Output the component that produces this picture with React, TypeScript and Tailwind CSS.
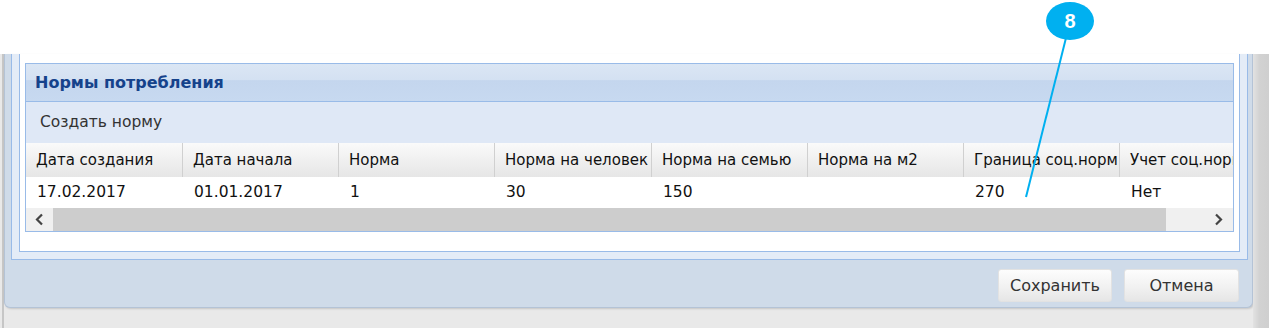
import React from 'react';

const font = { fontFamily: '"DejaVu Sans", Verdana, sans-serif' };

const columns = [
  { title: 'Дата создания', value: '17.02.2017', w: 'w-[157px]' },
  { title: 'Дата начала', value: '01.01.2017', w: 'w-[156px]' },
  { title: 'Норма', value: '1', w: 'w-[156px]' },
  { title: 'Норма на человек', value: '30', w: 'w-[157px]' },
  { title: 'Норма на семью', value: '150', w: 'w-[156px]' },
  { title: 'Норма на м2', value: '', w: 'w-[156px]' },
  { title: 'Граница соц.норм', value: '270', w: 'w-[156px]' },
  { title: 'Учет соц.норм', value: 'Нет', w: 'w-[156px]' },
];

const Chevron = ({ dir }: { dir: 'left' | 'right' }) => (
  <svg width="11" height="13" viewBox="0 0 11 13" fill="none" stroke="#444" strokeWidth={2.2}>
    {dir === 'left' ? <path d="M8 1.5 3 6.5l5 5" /> : <path d="M3 1.5l5 5-5 5" />}
  </svg>
);

const NormsGrid: React.FC = () => (
  <div className="border border-[#99bbe8] bg-white">
    <div className="h-[38px] flex items-center pl-[9px] border-b border-[#99bbe8] bg-[linear-gradient(#dbe6f4_0%,#d4e1f2_42%,#c4d6ee_45%,#c7d9f0_100%)]">
      <span className="text-[16px] font-bold text-[#15428b]">Нормы потребления</span>
    </div>
    <div className="h-[41px] flex items-center pl-[14px] bg-[#dfe8f6]">
      <span className="text-[15.5px] text-[#333]">Создать норму</span>
    </div>
    <div className="overflow-hidden">
      <div className="flex h-[34px] bg-[linear-gradient(#fafafa,#e6e6e6)] w-max">
        {columns.map((c) => (
          <div
            key={c.title}
            className={`${c.w} shrink-0 border-r border-[#d0d0d0] flex items-center pl-[10px] overflow-hidden whitespace-nowrap text-[15px] text-[#111]`}
          >
            {c.title}
          </div>
        ))}
      </div>
      <div className="flex h-[31px] bg-white w-max">
        {columns.map((c) => (
          <div
            key={c.title}
            className={`${c.w} shrink-0 flex items-center pl-[11px] whitespace-nowrap text-[15.5px] text-[#111]`}
          >
            {c.value}
          </div>
        ))}
      </div>
    </div>
    <div className="flex h-[23px] bg-[#f0f0f0]">
      <div className="w-[27px] flex items-center justify-center">
        <Chevron dir="left" />
      </div>
      <div className="w-[1113px] bg-[#cdcdcd]" />
      <div className="flex-1 flex items-center justify-end pr-[9px]">
        <Chevron dir="right" />
      </div>
    </div>
  </div>
);

const Button = ({ label, w }: { label: string; w: string }) => (
  <button
    className={`${w} h-[33px] rounded-[3px] border border-[#e2e2e2] bg-[linear-gradient(#fdfdfd,#f0f0f0_60%,#e6e6e6)] text-[16px] text-[#333]`}
  >
    {label}
  </button>
);

const App: React.FC = () => (
  <div className="relative w-[1269px] h-[328px] overflow-hidden bg-white" style={font}>
    <div className="h-[54px] bg-white" />
    <div className="flex h-[274px] bg-[linear-gradient(90deg,#e9e9e9_0px,#e9e9e9_2px,#c6c6c6_2px,#c6c6c6_4px,#e9e9e9_4px)]">
      <div className="ml-[4px] w-[1249px] h-[254px] rounded-b-[6px] border-x border-b border-[#b4c3d6] bg-[#cfdbe9] flex flex-col shadow-[1px_1px_2px_rgba(0,0,0,0.15)]">
        <div className="ml-[6px] mr-[4px] border-x border-b border-[#99bbe8] bg-[#e4ecf7] px-[7px] pb-[7px]">
          <div className="border-x border-b border-[#99bbe8] bg-white pt-[9px] px-[5px] pb-[19px]">
            <NormsGrid />
          </div>
        </div>
        <div className="flex justify-end gap-[12px] pr-[13px] pt-[9px]">
          <Button label="Сохранить" w="w-[114px]" />
          <Button label="Отмена" w="w-[115px]" />
        </div>
      </div>
      <div className="flex-1 bg-[linear-gradient(90deg,#e2e2e2,#d2d2d2_40%,#cfcfcf)]" />
    </div>

    <svg className="absolute left-0 top-0 pointer-events-none" width="1269" height="328">
      <line x1="1066" y1="38" x2="1026" y2="197" stroke="#00b0f0" strokeWidth={2} />
    </svg>
    <div className="absolute left-[1046px] top-[2px] w-[48px] h-[38px] rounded-[50%] bg-[#00b0f0] flex items-center justify-center">
      <span className="text-white font-bold text-[20px] leading-none" style={{ fontFamily: '"Liberation Sans", Arial, sans-serif' }}>8</span>
    </div>
  </div>
);

export default App;
